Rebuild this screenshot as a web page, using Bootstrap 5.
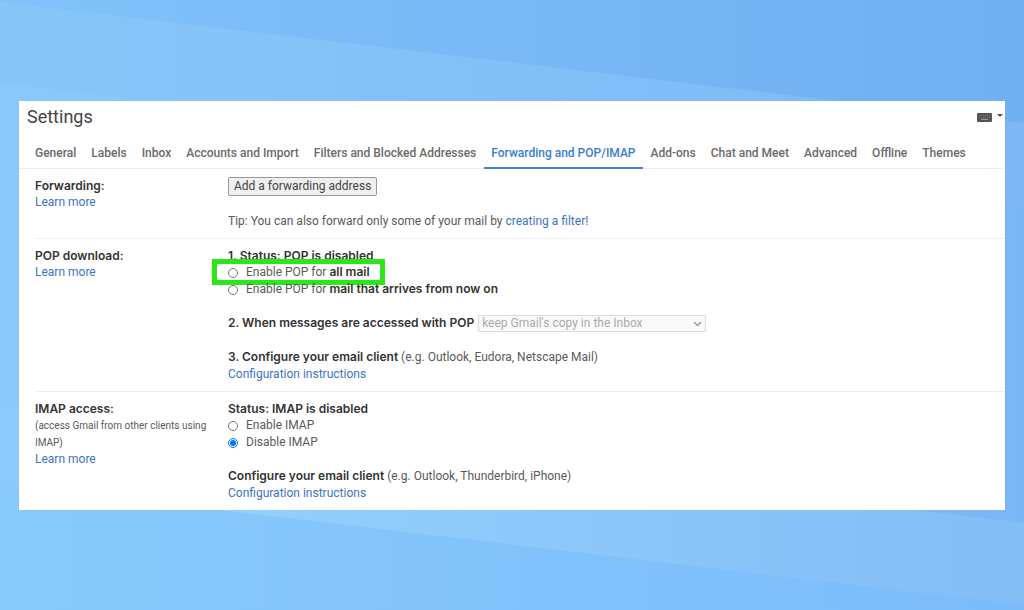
<!DOCTYPE html>
<html lang="en">
<head>
<meta charset="utf-8">
<meta name="viewport" content="width=device-width, initial-scale=1">
<title>Settings</title>
<link href="https://cdn.jsdelivr.net/npm/bootstrap@5.3.0/dist/css/bootstrap.min.css" rel="stylesheet">
<style>
  body { font-family: Roboto, "Liberation Sans", sans-serif; font-size: 12px; line-height: 17px; color: #5a5a5a; background: #80bff8; }
  a { color: #3d74c4; text-decoration: none; }
  strong, h2 { font-family: Inter, "Liberation Sans", sans-serif; font-weight: 600; color: #333; }
  strong { line-height: 1; }
  h2 { font-size: 12px; line-height: 17px; margin: 0; }
  .backdrop { z-index: -1; }
  .page-pad { padding: 101px 19px; }
  .panel { background: #fff; }
  .panel-title { font-size: 18px; line-height: 24px; font-weight: 400; color: #444; }
  .tabs { border-bottom: 1px solid #e8edf0; padding: 0 9px; gap: 1px; }
  .tabs .nav-link { padding: 8px 7px 5px; line-height: 17px; color: #6a6a6a; font-weight: 500; border-bottom: 2px solid transparent; margin-bottom: -1px; white-space: nowrap; }
  .tabs .nav-link.active { color: #3b7dd0; border-color: #4a83cb; }
  .setting { margin-left: 16px; padding: 8px 0; border-bottom: 1px solid #eee; }
  .setting:last-child { border-bottom: 0; }
  .setting-name { width: 193px; flex: none; padding-right: 16px; }
  .line-gap { margin-top: 17px; }
  .hint { font-size: 10px; }
  .btn-forward { font-size: 12px; line-height: 17px; padding: 0 5px; color: #444; background: #efefef; border: 1px solid #999; border-radius: 2px; }
  .choice { position: relative; width: fit-content; height: 17px; }
  .choice input { width: 10px; height: 10px; margin: 1px 8px 0 0; }
  .highlight::after { content: ""; position: absolute; inset: -5px -15px -4px -16px; border: 5px solid #2be619; pointer-events: none; }
  .copy-select { appearance: none; width: 228px; height: 17px; padding: 0 3px; font-size: 12px; line-height: 15px; color: #aaa; background: transparent; border: 1px solid #ddd; border-radius: 1px; }
  .select-wrap { background: #fafafa; }
  .select-wrap svg { right: 4px; top: 6px; pointer-events: none; }
</style>
</head>
<body>
<svg class="backdrop position-fixed top-0 start-0 w-100 h-100" viewBox="0 0 1024 610" preserveAspectRatio="none" aria-hidden="true">
  <defs>
    <linearGradient id="sky"><stop offset="0" stop-color="#80c2f9"/><stop offset="1" stop-color="#70aff2"/></linearGradient>
    <linearGradient id="upper"><stop offset="0" stop-color="#87c6f9"/><stop offset="1" stop-color="#7db8f5"/></linearGradient>
    <linearGradient id="middle"><stop offset="0" stop-color="#89c9fb"/><stop offset="1" stop-color="#7ab7f5"/></linearGradient>
    <linearGradient id="band"><stop offset="0" stop-color="#8acbfc"/><stop offset=".25" stop-color="#92cffc"/><stop offset="1" stop-color="#82bdf6"/></linearGradient>
    <linearGradient id="lower"><stop offset="0" stop-color="#89cafc"/><stop offset="1" stop-color="#7bbbf9"/></linearGradient>
  </defs>
  <path fill="url(#sky)" d="M0 0H1024V610H0z"/>
  <path fill="url(#upper)" d="M0 2L1024 123V610H0z"/>
  <path fill="url(#middle)" d="M0 83L1024 204V610H0z"/>
  <path fill="url(#band)" d="M0 402L1024 523V610H0z"/>
  <path fill="url(#lower)" d="M0 484L1024 605V610H0z"/>
</svg>
<div class="page-pad">
<main class="panel">
  <header class="d-flex justify-content-between align-items-center pt-1 ps-2">
    <h1 class="panel-title mb-0">Settings</h1>
    <button type="button" class="btn p-0 border-0 d-flex" aria-label="Input tools">
      <svg width="28" height="14" viewBox="0 0 28 14"><rect x="0" y="3" width="15" height="9" rx="1" fill="#555"/><path d="M2 5.500H13M2 7.500H13" stroke="#777" stroke-dasharray="1 1"/><path d="M4 9.500H11" stroke="#999"/><path d="M20 4H26L23 7z" fill="#555"/></svg>
    </button>
  </header>
  <nav class="nav tabs flex-nowrap mt-2">
    <a class="nav-link" href="#">General</a>
    <a class="nav-link" href="#">Labels</a>
    <a class="nav-link" href="#">Inbox</a>
    <a class="nav-link" href="#">Accounts and Import</a>
    <a class="nav-link" href="#">Filters and Blocked Addresses</a>
    <a class="nav-link active" aria-current="page" href="#">Forwarding and POP/IMAP</a>
    <a class="nav-link" href="#">Add-ons</a>
    <a class="nav-link" href="#">Chat and Meet</a>
    <a class="nav-link" href="#">Advanced</a>
    <a class="nav-link" href="#">Offline</a>
    <a class="nav-link" href="#">Themes</a>
  </nav>
  <section class="setting d-flex">
    <div class="setting-name"><h2>Forwarding:</h2><a href="#">Learn more</a></div>
    <div>
      <button type="button" class="btn btn-forward">Add a forwarding address</button>
      <div class="line-gap">Tip: You can also forward only some of your mail by <a href="#">creating a filter!</a></div>
    </div>
  </section>
  <section class="setting d-flex">
    <div class="setting-name"><h2>POP download:</h2><a href="#">Learn more</a></div>
    <div>
      <h2>1. Status: POP is disabled</h2>
      <div class="choice highlight d-flex align-items-center"><input type="radio" name="pop" id="popAll"><label for="popAll">Enable POP for <strong>all mail</strong></label></div>
      <div class="choice d-flex align-items-center"><input type="radio" name="pop" id="popNew"><label for="popNew">Enable POP for <strong>mail that arrives from now on</strong></label></div>
      <div class="d-flex align-items-center line-gap"><label class="pe-1" for="popCopy"><strong>2. When messages are accessed with POP</strong></label>
        <span class="select-wrap position-relative d-flex"><select class="copy-select" id="popCopy" disabled><option>keep Gmail's copy in the Inbox</option></select>
          <svg class="position-absolute" width="9" height="6" viewBox="0 0 9 6" fill="none" stroke="#999" stroke-width="1.500" aria-hidden="true"><path d="M1 1L4.500 4.500L8 1"/></svg></span></div>
      <div class="line-gap"><strong>3. Configure your email client</strong> (e.g. Outlook, Eudora, Netscape Mail)</div>
      <a href="#">Configuration instructions</a>
    </div>
  </section>
  <section class="setting d-flex">
    <div class="setting-name pe-0"><h2>IMAP access:</h2><div class="hint">(access Gmail from other clients using IMAP)</div><a href="#">Learn more</a></div>
    <div>
      <h2>Status: IMAP is disabled</h2>
      <div class="choice d-flex align-items-center"><input type="radio" name="imap" id="imapOn"><label for="imapOn">Enable IMAP</label></div>
      <div class="choice d-flex align-items-center"><input type="radio" name="imap" id="imapOff" checked><label for="imapOff">Disable IMAP</label></div>
      <div class="line-gap"><strong>Configure your email client</strong> (e.g. Outlook, Thunderbird, iPhone)</div>
      <a href="#">Configuration instructions</a>
    </div>
  </section>
</main>
</div>
<script src="https://cdn.jsdelivr.net/npm/bootstrap@5.3.0/dist/js/bootstrap.bundle.min.js"></script>
</body>
</html>
